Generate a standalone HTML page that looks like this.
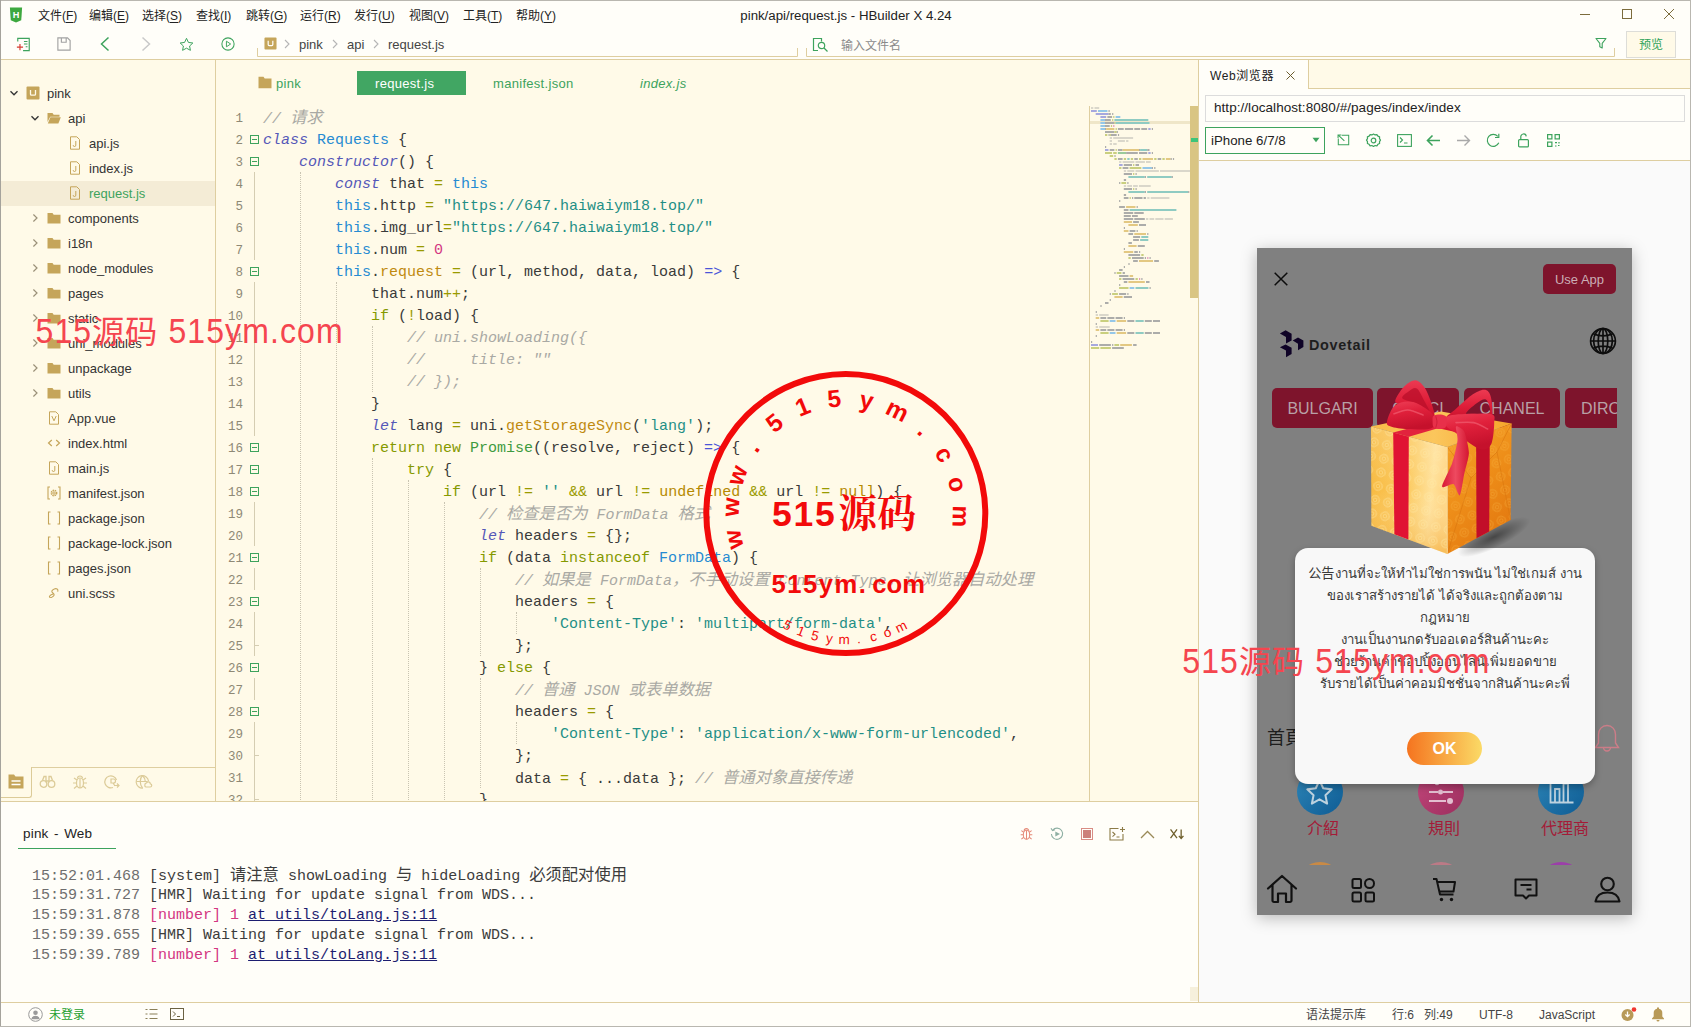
<!DOCTYPE html>
<html lang="zh-CN">
<head>
<meta charset="utf-8">
<title>pink/api/request.js - HBuilder X 4.24</title>
<style>
*{box-sizing:border-box;margin:0;padding:0}
html,body{width:1691px;height:1027px;overflow:hidden;background:#FFFAE8}
body{position:relative;font-family:"Liberation Sans","Noto Sans CJK SC",sans-serif;font-size:13px;color:#333}
.abs{position:absolute}
svg{display:block;overflow:visible}
/* top */
#top{position:absolute;left:0;top:0;width:1691px;height:59px;background:#FFFEF9}
#topline{position:absolute;left:0;top:59px;width:1691px;height:1px;background:#DECEA0}
.menu{position:absolute;top:7px;height:18px;line-height:18px;font-size:12px;color:#222;white-space:nowrap}
.menu u{text-decoration:underline;text-underline-offset:2px}
#title{position:absolute;top:7px;left:646px;width:400px;text-align:center;height:18px;line-height:18px;font-size:13.250px;color:#222}
.crumb{position:absolute;top:36px;height:18px;line-height:18px;font-size:13px;color:#444}
.csep{position:absolute;top:39px}
/* sidebar */
#side{position:absolute;left:0;top:60px;width:215px;height:741px;background:#FFFAE8}
#sideline{position:absolute;left:215px;top:60px;width:1px;height:741px;background:#DECEA0}
.trow{position:absolute;left:0;width:215px;height:25px}
.trow.sel{background:#F4ECD6}
.trow.sel .tl{color:#3DA35D}
.arr{position:absolute;top:7px;width:10px;height:10px}
.tiw{position:absolute;top:5px;width:14px;height:14px}
.ti{width:14px;height:14px}
.tl{position:absolute;top:4px;height:18px;line-height:18px;font-size:13px;color:#333;white-space:nowrap}
/* editor */
#editor{position:absolute;left:216px;top:60px;width:982px;height:741px;background:#FFFAE8;overflow:hidden}
.tab{letter-spacing:.3px;position:absolute;top:11px;height:24px;line-height:25px;font-size:13px;color:#3DA35D;white-space:nowrap}
#codewrap{position:absolute;left:0;top:0;width:1198px;height:801px;overflow:hidden;pointer-events:none;clip-path:inset(100px 0 0 216px)}
.ln{position:absolute;left:216px;width:27px;text-align:right;height:22px;line-height:22px;font-family:"Liberation Mono","DejaVu Sans Mono",monospace;font-size:12.5px;color:#8E8975}
.cl{position:absolute;height:22px;line-height:22px;white-space:pre;font-family:"Liberation Mono","Noto Sans CJK SC",monospace;font-size:15px;color:#3a3a3a}
.fold{position:absolute;left:250px;width:9px;height:9px;border:1px solid #3DA35D;background:#FFFAE8}
.fold:after{content:"";position:absolute;left:1px;top:3px;width:5px;height:1px;background:#3DA35D}
.fline{position:absolute;left:254px;width:1px;background:#D5CDB2}
.ftick{position:absolute;left:254px;width:5px;height:1px;background:#D5CDB2}
.ig{position:absolute;width:0;border-left:1px dotted #C9C4B2}
.cj{font-size:16.300px}
.k{color:#859900}.s{color:#5558B8;font-style:italic}.c{color:#268BD2}.t{color:#1F8F86}.n{color:#D33682}
.f{color:#C08A10}.m{color:#A9A9A4;font-style:italic}.o{color:#9A9A00}.u{color:#B58900}.a{color:#4A55D8}.g{color:#3E9A40}
/* console */
#console{position:absolute;left:0;top:802px;width:1198px;height:200px;background:#FFFEF9}
#conline{position:absolute;left:0;top:801px;width:1198px;height:1px;background:#DECEA0}
.log{position:absolute;left:32px;height:20px;line-height:20px;white-space:pre;font-family:"Liberation Mono","Noto Sans CJK SC",monospace;font-size:15px;color:#3c3c3c}
.log .ts{color:#6E6E6E}
.log .pk{color:#D33682}
.log a{color:#1D1D70;text-decoration:underline}
/* status */
#status{position:absolute;left:0;top:1003px;width:1691px;height:24px;background:#FFFEF9}
#statline{position:absolute;left:0;top:1002px;width:1691px;height:1px;background:#DECEA0}
.st{position:absolute;top:3px;height:18px;line-height:18px;font-size:12px;color:#444;white-space:nowrap}
/* right */
#right{position:absolute;left:1199px;top:60px;width:492px;height:941px;background:#FFFAE8}
#rightline{position:absolute;left:1198px;top:60px;width:1px;height:942px;background:#DECEA0}
/* watermark */
.wm{font-size:32px;line-height:40px;color:#F5454F;white-space:nowrap;letter-spacing:1.1px;font-family:"Liberation Sans","Noto Sans CJK SC",sans-serif}
.wl{display:inline-block;transform:scaleY(1.07);transform-origin:0 76.5%}
#preview{position:absolute;left:1199px;top:161px;width:492px;height:841px;background:#FAFAFA}
</style>
</head>
<body>
<!-- ============ top bars ============ -->
<div class="abs" style="left:0;top:0;width:1691px;height:1px;background:#B9B7B0;z-index:5"></div>
<div class="abs" style="left:0;top:0;width:1px;height:1027px;background:#A5A39C;z-index:5"></div>
<div class="abs" style="left:1690px;top:0;width:1px;height:1027px;background:#B9B7B0;z-index:5"></div>
<div class="abs" style="left:0;top:1026px;width:1691px;height:1px;background:#B9B7B0;z-index:5"></div>
<div id="top">
  <svg class="abs" style="left:9px;top:7px;width:14px;height:16px" viewBox="0 0 16 18"><path d="M1 0.5h14l-1 14.5L8 17.5 2 15z" fill="#3DA83F"/><text x="8" y="12.2" text-anchor="middle" font-family="Liberation Sans,sans-serif" font-size="10.5" font-weight="bold" fill="#fff">H</text></svg>
  <div class="menu" style="left:38px">文件(<u>F</u>)</div>
  <div class="menu" style="left:89px">编辑(<u>E</u>)</div>
  <div class="menu" style="left:142px">选择(<u>S</u>)</div>
  <div class="menu" style="left:196px">查找(<u>I</u>)</div>
  <div class="menu" style="left:246px">跳转(<u>G</u>)</div>
  <div class="menu" style="left:300px">运行(<u>R</u>)</div>
  <div class="menu" style="left:354px">发行(<u>U</u>)</div>
  <div class="menu" style="left:409px">视图(<u>V</u>)</div>
  <div class="menu" style="left:463px">工具(<u>T</u>)</div>
  <div class="menu" style="left:516px">帮助(<u>Y</u>)</div>
  <div id="title">pink/api/request.js - HBuilder X 4.24</div>
  <!-- window controls -->
  <svg class="abs" style="left:1580px;top:9px;width:10px;height:10px" viewBox="0 0 10 10"><path d="M0 5.500h10" stroke="#7C6C3C" stroke-width="1"/></svg>
  <svg class="abs" style="left:1622px;top:9px;width:10px;height:10px" viewBox="0 0 10 10"><rect x="0.500" y="0.500" width="9" height="9" fill="none" stroke="#7C6C3C" stroke-width="1"/></svg>
  <svg class="abs" style="left:1664px;top:9px;width:10px;height:10px" viewBox="0 0 10 10"><path d="M0 0l10 10M10 0L0 10" stroke="#7C6C3C" stroke-width="1"/></svg>
  <!-- toolbar icons -->
  <svg class="abs" style="left:16px;top:37px;width:15px;height:15px" viewBox="0 0 17 17"><path d="M2 5V1.5h13v14H8" fill="none" stroke="#3DA35D" stroke-width="1.3"/><path d="M9 5h4M9 8h4M11 11h2" stroke="#3DA35D" stroke-width="1.2"/><path d="M1 11.5h7M4.5 8v7" stroke="#D63A2F" stroke-width="1.3"/></svg>
  <svg class="abs" style="left:57px;top:37px;width:14px;height:14px" viewBox="0 0 16 16"><path d="M1 1h11l3 3v11H1z" fill="none" stroke="#A2A2A2" stroke-width="1.300"/><path d="M5 1v5h5.500V1" fill="none" stroke="#A2A2A2" stroke-width="1.300"/></svg>
  <svg class="abs" style="left:99px;top:36px;width:12px;height:16px" viewBox="0 0 12 16"><path d="M9.5 1.5L2.5 8l7 6.5" fill="none" stroke="#3DA35D" stroke-width="1.5"/></svg>
  <svg class="abs" style="left:140px;top:36px;width:12px;height:16px" viewBox="0 0 12 16"><path d="M2.5 1.5L9.5 8l-7 6.5" fill="none" stroke="#C9C9C9" stroke-width="1.5"/></svg>
  <svg class="abs" style="left:179px;top:37px;width:15px;height:15px" viewBox="0 0 18 18"><path d="M9 1.6l2.3 4.9 5.3.7-3.9 3.6 1 5.2L9 13.4 4.3 16l1-5.2L1.4 7.2l5.3-.7z" fill="none" stroke="#3DA35D" stroke-width="1.2" stroke-linejoin="round"/></svg>
  <svg class="abs" style="left:221px;top:37px;width:14px;height:14px" viewBox="0 0 16 16"><circle cx="8" cy="8" r="7" fill="none" stroke="#3DA35D" stroke-width="1.2"/><path d="M6.2 4.8L11 8l-4.800 3.200z" fill="none" stroke="#3DA35D" stroke-width="1.1" stroke-linejoin="round"/></svg>
  <!-- breadcrumb -->
  <svg class="abs" style="left:257px;top:48px;width:541px;height:9px" viewBox="0 0 541 9"><path d="M0.5 0v8.500h540V0" fill="none" stroke="#DECEA0" stroke-width="1"/></svg>
  <svg class="abs" style="left:264px;top:37px;width:13px;height:13px" viewBox="0 0 14 14"><rect x="0.5" y="0.5" width="13" height="13" rx="1" fill="#C5A55A"/><path d="M4.5 4v4.2a1 1 0 0 0 1 1h3a1 1 0 0 0 1-1V4" fill="none" stroke="#FFFEF9" stroke-width="1.3"/></svg>
  <svg class="csep" style="left:283px;width:8px;height:10px" viewBox="0 0 8 10"><path d="M2 1l4 4-4 4" fill="none" stroke="#B5B5B5" stroke-width="1.1"/></svg>
  <div class="crumb" style="left:299px">pink</div>
  <svg class="csep" style="left:331px;width:8px;height:10px" viewBox="0 0 8 10"><path d="M2 1l4 4-4 4" fill="none" stroke="#B5B5B5" stroke-width="1.1"/></svg>
  <div class="crumb" style="left:347px">api</div>
  <svg class="csep" style="left:372px;width:8px;height:10px" viewBox="0 0 8 10"><path d="M2 1l4 4-4 4" fill="none" stroke="#B5B5B5" stroke-width="1.1"/></svg>
  <div class="crumb" style="left:388px">request.js</div>
  <!-- search -->
  <svg class="abs" style="left:806px;top:48px;width:809px;height:9px" viewBox="0 0 809 9"><path d="M0.5 0v8.500h808V0" fill="none" stroke="#DECEA0" stroke-width="1"/></svg>
  <svg class="abs" style="left:812px;top:37px;width:17px;height:16px" viewBox="0 0 17 16"><path d="M6 13.500H1.500v-12h8v3" fill="none" stroke="#3DA35D" stroke-width="1.2"/><circle cx="9.500" cy="8.500" r="3.200" fill="none" stroke="#3DA35D" stroke-width="1.2"/><path d="M12 11l3.500 3.500" stroke="#3DA35D" stroke-width="1.3"/></svg>
  <div class="crumb" style="left:841px;top:36.500px;color:#8a8a8a;font-size:12px">输入文件名</div>
  <svg class="abs" style="left:1595px;top:37px;width:12px;height:12px" viewBox="0 0 12 12"><path d="M1 1.500h10L7.200 6.300V11l-2.400-1.200V6.300z" fill="none" stroke="#3DA35D" stroke-width="1.100" stroke-linejoin="round"/></svg>
  <div class="abs" style="left:1626px;top:31px;width:50px;height:27px;border:1px solid #DDDDD8;background:#FFFAE8;color:#2FA35A;font-size:12px;line-height:27px;text-align:center">预览</div>
</div>
<div id="topline"></div>

<!-- ============ sidebar ============ -->
<div id="side"></div>
<div id="sideline"></div>
<div class="abs" style="left:0;top:0;width:215px;height:801px;overflow:hidden">
<div class="trow" style="top:81px"><svg class="arr" style="left:9px" viewBox="0 0 10 10"><path d="M1.5 3.2L5 6.8 8.5 3.2" fill="none" stroke="#333" stroke-width="1.3"/></svg><span class="tiw" style="left:26px"><svg class="ti" viewBox="0 0 14 14"><rect x="0.5" y="0.5" width="13" height="13" rx="1" fill="#C5A55A"/><path d="M4.5 4v4.2a1 1 0 0 0 1 1h3a1 1 0 0 0 1-1V4" fill="none" stroke="#FFFAE8" stroke-width="1.3"/></svg></span><span class="tl" style="left:47px">pink</span></div>
<div class="trow" style="top:106px"><svg class="arr" style="left:30px" viewBox="0 0 10 10"><path d="M1.5 3.2L5 6.8 8.5 3.2" fill="none" stroke="#333" stroke-width="1.3"/></svg><span class="tiw" style="left:47px"><svg class="ti" viewBox="0 0 14 14"><path d="M0.5 2h5l1.2 1.8h5.8v2H3.2L0.5 11z" fill="#C5A55A"/><path d="M3.4 6.3h10.4l-2.4 6.2H0.8z" fill="#C5A55A"/></svg></span><span class="tl" style="left:68px">api</span></div>
<div class="trow" style="top:131px"><span class="tiw" style="left:68px"><svg class="ti" viewBox="0 0 14 14"><path d="M2.5 0.8h6.3l2.7 2.7v9.7h-9z" fill="none" stroke="#C5A55A" stroke-width="1"/><path d="M7.8 5v4.2a1.3 1.3 0 0 1-2.6 0" fill="none" stroke="#C5A55A" stroke-width="1"/></svg></span><span class="tl" style="left:89px">api.js</span></div>
<div class="trow" style="top:156px"><span class="tiw" style="left:68px"><svg class="ti" viewBox="0 0 14 14"><path d="M2.5 0.8h6.3l2.7 2.7v9.7h-9z" fill="none" stroke="#C5A55A" stroke-width="1"/><path d="M7.8 5v4.2a1.3 1.3 0 0 1-2.6 0" fill="none" stroke="#C5A55A" stroke-width="1"/></svg></span><span class="tl" style="left:89px">index.js</span></div>
<div class="trow sel" style="top:181px"><span class="tiw" style="left:68px"><svg class="ti" viewBox="0 0 14 14"><path d="M2.5 0.8h6.3l2.7 2.7v9.7h-9z" fill="none" stroke="#C5A55A" stroke-width="1"/><path d="M7.8 5v4.2a1.3 1.3 0 0 1-2.6 0" fill="none" stroke="#C5A55A" stroke-width="1"/></svg></span><span class="tl" style="left:89px">request.js</span></div>
<div class="trow" style="top:206px"><svg class="arr" style="left:30px" viewBox="0 0 10 10"><path d="M3.4 1.5L7 5 3.4 8.5" fill="none" stroke="#9a9078" stroke-width="1.2"/></svg><span class="tiw" style="left:47px"><svg class="ti" viewBox="0 0 14 14"><path d="M0.5 2h5l1.2 1.8h6.8v8.7h-13z" fill="#C5A55A"/></svg></span><span class="tl" style="left:68px">components</span></div>
<div class="trow" style="top:231px"><svg class="arr" style="left:30px" viewBox="0 0 10 10"><path d="M3.4 1.5L7 5 3.4 8.5" fill="none" stroke="#9a9078" stroke-width="1.2"/></svg><span class="tiw" style="left:47px"><svg class="ti" viewBox="0 0 14 14"><path d="M0.5 2h5l1.2 1.8h6.8v8.7h-13z" fill="#C5A55A"/></svg></span><span class="tl" style="left:68px">i18n</span></div>
<div class="trow" style="top:256px"><svg class="arr" style="left:30px" viewBox="0 0 10 10"><path d="M3.4 1.5L7 5 3.4 8.5" fill="none" stroke="#9a9078" stroke-width="1.2"/></svg><span class="tiw" style="left:47px"><svg class="ti" viewBox="0 0 14 14"><path d="M0.5 2h5l1.2 1.8h6.8v8.7h-13z" fill="#C5A55A"/></svg></span><span class="tl" style="left:68px">node_modules</span></div>
<div class="trow" style="top:281px"><svg class="arr" style="left:30px" viewBox="0 0 10 10"><path d="M3.4 1.5L7 5 3.4 8.5" fill="none" stroke="#9a9078" stroke-width="1.2"/></svg><span class="tiw" style="left:47px"><svg class="ti" viewBox="0 0 14 14"><path d="M0.5 2h5l1.2 1.8h6.8v8.7h-13z" fill="#C5A55A"/></svg></span><span class="tl" style="left:68px">pages</span></div>
<div class="trow" style="top:306px"><svg class="arr" style="left:30px" viewBox="0 0 10 10"><path d="M3.4 1.5L7 5 3.4 8.5" fill="none" stroke="#9a9078" stroke-width="1.2"/></svg><span class="tiw" style="left:47px"><svg class="ti" viewBox="0 0 14 14"><path d="M0.5 2h5l1.2 1.8h6.8v8.7h-13z" fill="#C5A55A"/></svg></span><span class="tl" style="left:68px">static</span></div>
<div class="trow" style="top:331px"><svg class="arr" style="left:30px" viewBox="0 0 10 10"><path d="M3.4 1.5L7 5 3.4 8.5" fill="none" stroke="#9a9078" stroke-width="1.2"/></svg><span class="tiw" style="left:47px"><svg class="ti" viewBox="0 0 14 14"><path d="M0.5 2h5l1.2 1.8h6.8v8.7h-13z" fill="#C5A55A"/></svg></span><span class="tl" style="left:68px">uni_modules</span></div>
<div class="trow" style="top:356px"><svg class="arr" style="left:30px" viewBox="0 0 10 10"><path d="M3.4 1.5L7 5 3.4 8.5" fill="none" stroke="#9a9078" stroke-width="1.2"/></svg><span class="tiw" style="left:47px"><svg class="ti" viewBox="0 0 14 14"><path d="M0.5 2h5l1.2 1.8h6.8v8.7h-13z" fill="#C5A55A"/></svg></span><span class="tl" style="left:68px">unpackage</span></div>
<div class="trow" style="top:381px"><svg class="arr" style="left:30px" viewBox="0 0 10 10"><path d="M3.4 1.5L7 5 3.4 8.5" fill="none" stroke="#9a9078" stroke-width="1.2"/></svg><span class="tiw" style="left:47px"><svg class="ti" viewBox="0 0 14 14"><path d="M0.5 2h5l1.2 1.8h6.8v8.7h-13z" fill="#C5A55A"/></svg></span><span class="tl" style="left:68px">utils</span></div>
<div class="trow" style="top:406px"><span class="tiw" style="left:47px"><svg class="ti" viewBox="0 0 14 14"><path d="M2.5 0.8h6.3l2.7 2.7v9.7h-9z" fill="none" stroke="#C5A55A" stroke-width="1"/><path d="M4.8 5l2.2 4.8L9.2 5" fill="none" stroke="#C5A55A" stroke-width="1"/></svg></span><span class="tl" style="left:68px">App.vue</span></div>
<div class="trow" style="top:431px"><span class="tiw" style="left:47px"><svg class="ti" viewBox="0 0 14 14"><path d="M4.8 4L1.5 7l3.3 3M9.2 4l3.3 3-3.3 3" fill="none" stroke="#C5A55A" stroke-width="1.2"/></svg></span><span class="tl" style="left:68px">index.html</span></div>
<div class="trow" style="top:456px"><span class="tiw" style="left:47px"><svg class="ti" viewBox="0 0 14 14"><path d="M2.5 0.8h6.3l2.7 2.7v9.7h-9z" fill="none" stroke="#C5A55A" stroke-width="1"/><path d="M7.8 5v4.2a1.3 1.3 0 0 1-2.6 0" fill="none" stroke="#C5A55A" stroke-width="1"/></svg></span><span class="tl" style="left:68px">main.js</span></div>
<div class="trow" style="top:481px"><span class="tiw" style="left:47px"><svg class="ti" viewBox="0 0 14 14"><path d="M3 1H1v12h2M11 1h2v12h-2" fill="none" stroke="#C5A55A" stroke-width="1.1"/><circle cx="7" cy="7" r="2.6" fill="none" stroke="#C5A55A" stroke-width="1.6" stroke-dasharray="1.4 0.7"/><circle cx="7" cy="7" r="1.6" fill="#C5A55A"/><circle cx="7" cy="7" r="0.7" fill="#FFFAE8"/></svg></span><span class="tl" style="left:68px">manifest.json</span></div>
<div class="trow" style="top:506px"><span class="tiw" style="left:47px"><svg class="ti" viewBox="0 0 14 14"><path d="M3.5 1H1.5v12h2M10.5 1h2v12h-2" fill="none" stroke="#C5A55A" stroke-width="1.1"/></svg></span><span class="tl" style="left:68px">package.json</span></div>
<div class="trow" style="top:531px"><span class="tiw" style="left:47px"><svg class="ti" viewBox="0 0 14 14"><path d="M3.5 1H1.5v12h2M10.5 1h2v12h-2" fill="none" stroke="#C5A55A" stroke-width="1.1"/></svg></span><span class="tl" style="left:68px">package-lock.json</span></div>
<div class="trow" style="top:556px"><span class="tiw" style="left:47px"><svg class="ti" viewBox="0 0 14 14"><path d="M3.5 1H1.5v12h2M10.5 1h2v12h-2" fill="none" stroke="#C5A55A" stroke-width="1.1"/></svg></span><span class="tl" style="left:68px">pages.json</span></div>
<div class="trow" style="top:581px"><span class="tiw" style="left:47px"><svg class="ti" viewBox="0 0 14 14"><path d="M10.8 5.2C11.5 3.2 9.5 2 7.3 2.9 5 3.8 4 5.6 5.6 6.8 7.2 8 7.6 9 6.4 10.2 5.2 11.4 3.4 12 2.6 11.2 1.8 10.4 3.6 8.6 5.6 8.2" fill="none" stroke="#C5A55A" stroke-width="1.1" stroke-linecap="round"/></svg></span><span class="tl" style="left:68px">uni.scss</span></div>
</div>
<!-- sidebar bottom tabs -->
<div class="abs" style="left:0;top:767px;width:215px;height:1px;background:#DECEA0"></div>
<div class="abs" style="left:0;top:767px;width:32px;height:31px;background:#FFFAE8;border-right:1px solid #DCCB98;border-bottom:1px solid #DCCB98;border-bottom-right-radius:3px"></div>
<svg class="abs" style="left:8px;top:774px;width:16px;height:15px" viewBox="0 0 16 15"><path d="M0.500 0.500h5.500l1.500 2h8v12h-15z" fill="#C5A55A"/><path d="M3.500 7h9M3.500 10.500h9" stroke="#FFFEF9" stroke-width="1.300"/></svg>
<svg class="abs" style="left:39px;top:774px;width:17px;height:15px" viewBox="0 0 17 15"><g fill="none" stroke="#DCCB98" stroke-width="1.3"><circle cx="4.500" cy="10" r="3.300"/><circle cx="12.500" cy="10" r="3.300"/><path d="M3.500 6.500l1.500-4h2v6M13.500 6.500l-1.500-4h-2v6M7 7h3"/></g></svg>
<svg class="abs" style="left:72px;top:774px;width:16px;height:16px" viewBox="0 0 16 16"><g fill="none" stroke="#DCCB98" stroke-width="1.2"><ellipse cx="8" cy="9" rx="3.500" ry="5"/><path d="M5.500 4.500a2.500 2.500 0 0 1 5 0M8 4.500v9.500M1 9h3.500M11.500 9H15M2 4l3 2M14 4l-3 2M2 14.500l3-2.500M14 14.500l-3-2.500"/></g></svg>
<svg class="abs" style="left:103px;top:774px;width:17px;height:16px" viewBox="0 0 17 16"><g fill="none" stroke="#DCCB98" stroke-width="1.2"><path d="M13.500 6A6 6 0 1 0 10 13.500"/><path d="M8 5h2.500a2 2 0 0 1 0 4H8zM10 9l2 3"/><path d="M11 11.500h5M14 9.500l2 2-2 2"/></g></svg>
<svg class="abs" style="left:135px;top:774px;width:17px;height:16px" viewBox="0 0 17 16"><g fill="none" stroke="#DCCB98" stroke-width="1.2"><path d="M13.500 7A6.200 6.200 0 1 0 8 14"/><path d="M1.500 7.500h11M7.500 1.500c-3 3-3 9 0 12.500M7.500 1.500c2 2 2.800 4 2.800 6"/><path d="M10 11a1.500 1.500 0 0 1 1.500-2 2 2 0 0 1 3.800.8 1.600 1.600 0 0 1-.3 3.200h-4a1.300 1.300 0 0 1-1-2z"/></g></svg>

<!-- ============ editor ============ -->
<div id="editor">
  <svg class="abs" style="left:42px;top:16px;width:14px;height:13px" viewBox="0 0 14 13"><path d="M0.500 0.800h5l1.200 1.800h6.800v9.600h-13z" fill="#C5A55A"/></svg>
  <div class="tab" style="left:60px">pink</div>
  <div class="tab" style="left:141px;width:109px;background:#41A663;color:#fff;padding-left:18px">request.js</div>
  <div class="tab" style="left:277px">manifest.json</div>
  <div class="tab" style="left:424px;font-style:italic">index.js</div>
</div>
<div id="codewrap">
<div class="ig" style="left:300px;top:172px;height:638px"></div>
<div class="ig" style="left:336px;top:282px;height:528px"></div>
<div class="ig" style="left:372px;top:326px;height:66px"></div>
<div class="ig" style="left:372px;top:458px;height:352px"></div>
<div class="ig" style="left:408px;top:480px;height:330px"></div>
<div class="ig" style="left:444px;top:502px;height:308px"></div>
<div class="ig" style="left:480px;top:568px;height:88px"></div>
<div class="ig" style="left:480px;top:678px;height:110px"></div>
<div class="ig" style="left:516px;top:612px;height:22px"></div>
<div class="ig" style="left:516px;top:722px;height:22px"></div>
<div class="fline" style="top:172px;height:22px"></div>
<div class="fline" style="top:194px;height:22px"></div>
<div class="fline" style="top:216px;height:22px"></div>
<div class="fline" style="top:238px;height:22px"></div>
<div class="fline" style="top:282px;height:22px"></div>
<div class="fline" style="top:304px;height:22px"></div>
<div class="fline" style="top:326px;height:22px"></div>
<div class="fline" style="top:348px;height:22px"></div>
<div class="fline" style="top:370px;height:22px"></div>
<div class="fline" style="top:392px;height:22px"></div>
<div class="fline" style="top:414px;height:22px"></div>
<div class="fline" style="top:502px;height:22px"></div>
<div class="fline" style="top:524px;height:22px"></div>
<div class="fline" style="top:568px;height:22px"></div>
<div class="fline" style="top:612px;height:22px"></div>
<div class="fline" style="top:634px;height:22px"></div>
<div class="ftick" style="top:645px"></div>
<div class="fline" style="top:678px;height:22px"></div>
<div class="fline" style="top:722px;height:22px"></div>
<div class="fline" style="top:744px;height:22px"></div>
<div class="ftick" style="top:755px"></div>
<div class="fline" style="top:766px;height:22px"></div>
<div class="fline" style="top:788px;height:22px"></div>
<div class="ftick" style="top:799px"></div>
<div class="ln" style="top:108px">1</div>
<div class="cl" style="top:108px;left:263px"><span class="m">// <span class="cj">请求</span></span></div>
<div class="ln" style="top:130px">2</div>
<div class="fold" style="top:135px"></div>
<div class="cl" style="top:130px;left:263px"><span class="s">class</span> <span class="c">Requests</span> {</div>
<div class="ln" style="top:152px">3</div>
<div class="fold" style="top:157px"></div>
<div class="cl" style="top:152px;left:299px"><span class="s">constructor</span>() {</div>
<div class="ln" style="top:174px">4</div>
<div class="cl" style="top:174px;left:335px"><span class="s">const</span> that <span class="o">=</span> <span class="c">this</span></div>
<div class="ln" style="top:196px">5</div>
<div class="cl" style="top:196px;left:335px"><span class="c">this</span>.http <span class="o">=</span> <span class="t">"https://647.haiwaiym18.top/"</span></div>
<div class="ln" style="top:218px">6</div>
<div class="cl" style="top:218px;left:335px"><span class="c">this</span>.img_url<span class="o">=</span><span class="t">"https://647.haiwaiym18.top/"</span></div>
<div class="ln" style="top:240px">7</div>
<div class="cl" style="top:240px;left:335px"><span class="c">this</span>.num <span class="o">=</span> <span class="n">0</span></div>
<div class="ln" style="top:262px">8</div>
<div class="fold" style="top:267px"></div>
<div class="cl" style="top:262px;left:335px"><span class="c">this</span>.<span class="f">request</span> <span class="o">=</span> (url, method, data, load) <span class="a">=&gt;</span> {</div>
<div class="ln" style="top:284px">9</div>
<div class="cl" style="top:284px;left:371px">that.num<span class="o">++</span>;</div>
<div class="ln" style="top:306px">10</div>
<div class="cl" style="top:306px;left:371px"><span class="k">if</span> (<span class="o">!</span>load) {</div>
<div class="ln" style="top:328px">11</div>
<div class="cl" style="top:328px;left:407px"><span class="m">// uni.showLoading({</span></div>
<div class="ln" style="top:350px">12</div>
<div class="cl" style="top:350px;left:407px"><span class="m">//     title: ""</span></div>
<div class="ln" style="top:372px">13</div>
<div class="cl" style="top:372px;left:407px"><span class="m">// });</span></div>
<div class="ln" style="top:394px">14</div>
<div class="cl" style="top:394px;left:371px">}</div>
<div class="ln" style="top:416px">15</div>
<div class="cl" style="top:416px;left:371px"><span class="s">let</span> lang <span class="o">=</span> uni.<span class="f">getStorageSync</span>(<span class="t">'lang'</span>);</div>
<div class="ln" style="top:438px">16</div>
<div class="fold" style="top:443px"></div>
<div class="cl" style="top:438px;left:371px"><span class="k">return</span> <span class="k">new</span> <span class="g">Promise</span>((resolve, reject) <span class="a">=&gt;</span> {</div>
<div class="ln" style="top:460px">17</div>
<div class="fold" style="top:465px"></div>
<div class="cl" style="top:460px;left:407px"><span class="k">try</span> {</div>
<div class="ln" style="top:482px">18</div>
<div class="fold" style="top:487px"></div>
<div class="cl" style="top:482px;left:443px"><span class="k">if</span> (url <span class="o">!=</span> <span class="t">''</span> <span class="o">&amp;&amp;</span> url <span class="o">!=</span> <span class="u">undefined</span> <span class="o">&amp;&amp;</span> url <span class="o">!=</span> <span class="u">null</span>) {</div>
<div class="ln" style="top:504px">19</div>
<div class="cl" style="top:504px;left:479px"><span class="m">// <span class="cj">检查是否为</span> FormData <span class="cj">格式</span></span></div>
<div class="ln" style="top:526px">20</div>
<div class="cl" style="top:526px;left:479px"><span class="s">let</span> headers <span class="o">=</span> {};</div>
<div class="ln" style="top:548px">21</div>
<div class="fold" style="top:553px"></div>
<div class="cl" style="top:548px;left:479px"><span class="k">if</span> (data <span class="k">instanceof</span> <span class="c">FormData</span>) {</div>
<div class="ln" style="top:570px">22</div>
<div class="cl" style="top:570px;left:515px"><span class="m">// <span class="cj">如果是</span> FormData<span class="cj">，不手动设置</span> Content-Type<span class="cj">，让浏览器自动处理</span></span></div>
<div class="ln" style="top:592px">23</div>
<div class="fold" style="top:597px"></div>
<div class="cl" style="top:592px;left:515px">headers <span class="o">=</span> {</div>
<div class="ln" style="top:614px">24</div>
<div class="cl" style="top:614px;left:551px"><span class="t">'Content-Type'</span>: <span class="t">'multipart/form-data'</span>,</div>
<div class="ln" style="top:636px">25</div>
<div class="cl" style="top:636px;left:515px">};</div>
<div class="ln" style="top:658px">26</div>
<div class="fold" style="top:663px"></div>
<div class="cl" style="top:658px;left:479px">} <span class="k">else</span> {</div>
<div class="ln" style="top:680px">27</div>
<div class="cl" style="top:680px;left:515px"><span class="m">// <span class="cj">普通</span> JSON <span class="cj">或表单数据</span></span></div>
<div class="ln" style="top:702px">28</div>
<div class="fold" style="top:707px"></div>
<div class="cl" style="top:702px;left:515px">headers <span class="o">=</span> {</div>
<div class="ln" style="top:724px">29</div>
<div class="cl" style="top:724px;left:551px"><span class="t">'Content-Type'</span>: <span class="t">'application/x-www-form-urlencoded'</span>,</div>
<div class="ln" style="top:746px">30</div>
<div class="cl" style="top:746px;left:515px">};</div>
<div class="ln" style="top:768px">31</div>
<div class="cl" style="top:768px;left:515px">data <span class="o">=</span> { ...data }; <span class="m">// <span class="cj">普通对象直接传递</span></span></div>
<div class="ln" style="top:790px">32</div>
<div class="cl" style="top:790px;left:479px">}</div>
</div>
<!-- minimap + scrollbar -->
<div class="abs" style="left:1089px;top:106px;width:1px;height:695px;background:#DECEA0"></div>
<div class="abs" style="left:1090px;top:121px;width:100px;height:3px;background:#EFE6C8"></div><svg class="abs" style="left:0;top:0;width:1691px;height:801px" viewBox="0 0 1691 801"><rect x="1091.0" y="107.0" width="2.3" height="2" fill="#DAD7CB"/><rect x="1094.5" y="107.0" width="4.7" height="2" fill="#DAD7CB"/><rect x="1091.0" y="110.0" width="5.8" height="2" fill="#A6A8DE"/><rect x="1098.0" y="110.0" width="9.4" height="2" fill="#95C7E8"/><rect x="1108.5" y="110.0" width="1.2" height="2" fill="#ACACAA"/><rect x="1095.7" y="113.0" width="12.9" height="2" fill="#A6A8DE"/><rect x="1108.5" y="113.0" width="2.3" height="2" fill="#ACACAA"/><rect x="1112.1" y="113.0" width="1.2" height="2" fill="#ACACAA"/><rect x="1100.4" y="116.0" width="5.8" height="2" fill="#A6A8DE"/><rect x="1107.4" y="116.0" width="4.7" height="2" fill="#ACACAA"/><rect x="1113.2" y="116.0" width="1.2" height="2" fill="#C9CF7E"/><rect x="1115.6" y="116.0" width="4.7" height="2" fill="#95C7E8"/><rect x="1100.4" y="119.0" width="4.7" height="2" fill="#95C7E8"/><rect x="1105.0" y="119.0" width="5.8" height="2" fill="#ACACAA"/><rect x="1112.1" y="119.0" width="1.2" height="2" fill="#C9CF7E"/><rect x="1114.4" y="119.0" width="33.9" height="2" fill="#8FCBC2"/><rect x="1100.4" y="122.0" width="4.7" height="2" fill="#95C7E8"/><rect x="1105.0" y="122.0" width="9.4" height="2" fill="#ACACAA"/><rect x="1114.4" y="122.0" width="1.2" height="2" fill="#C9CF7E"/><rect x="1115.6" y="122.0" width="33.9" height="2" fill="#8FCBC2"/><rect x="1100.4" y="125.0" width="4.7" height="2" fill="#95C7E8"/><rect x="1105.0" y="125.0" width="4.7" height="2" fill="#ACACAA"/><rect x="1110.9" y="125.0" width="1.2" height="2" fill="#C9CF7E"/><rect x="1113.2" y="125.0" width="1.2" height="2" fill="#E59ABD"/><rect x="1100.4" y="128.0" width="4.7" height="2" fill="#95C7E8"/><rect x="1105.0" y="128.0" width="1.2" height="2" fill="#ACACAA"/><rect x="1106.2" y="128.0" width="8.2" height="2" fill="#E3C882"/><rect x="1115.6" y="128.0" width="1.2" height="2" fill="#C9CF7E"/><rect x="1117.9" y="128.0" width="5.8" height="2" fill="#ACACAA"/><rect x="1124.9" y="128.0" width="8.2" height="2" fill="#ACACAA"/><rect x="1134.3" y="128.0" width="5.8" height="2" fill="#ACACAA"/><rect x="1141.3" y="128.0" width="5.8" height="2" fill="#ACACAA"/><rect x="1148.3" y="128.0" width="2.3" height="2" fill="#A6A8DE"/><rect x="1151.8" y="128.0" width="1.2" height="2" fill="#ACACAA"/><rect x="1105.0" y="131.0" width="9.4" height="2" fill="#ACACAA"/><rect x="1114.4" y="131.0" width="2.3" height="2" fill="#C9CF7E"/><rect x="1116.7" y="131.0" width="1.2" height="2" fill="#ACACAA"/><rect x="1105.0" y="134.0" width="2.3" height="2" fill="#C9CF7E"/><rect x="1108.5" y="134.0" width="1.2" height="2" fill="#ACACAA"/><rect x="1109.7" y="134.0" width="1.2" height="2" fill="#C9CF7E"/><rect x="1110.9" y="134.0" width="5.8" height="2" fill="#ACACAA"/><rect x="1117.9" y="134.0" width="1.2" height="2" fill="#ACACAA"/><rect x="1109.7" y="137.0" width="2.3" height="2" fill="#DAD7CB"/><rect x="1113.2" y="137.0" width="19.9" height="2" fill="#DAD7CB"/><rect x="1109.7" y="140.0" width="2.3" height="2" fill="#DAD7CB"/><rect x="1117.9" y="140.0" width="7.0" height="2" fill="#DAD7CB"/><rect x="1126.1" y="140.0" width="2.3" height="2" fill="#DAD7CB"/><rect x="1109.7" y="143.0" width="2.3" height="2" fill="#DAD7CB"/><rect x="1113.2" y="143.0" width="3.5" height="2" fill="#DAD7CB"/><rect x="1105.0" y="146.0" width="1.2" height="2" fill="#ACACAA"/><rect x="1105.0" y="149.0" width="3.5" height="2" fill="#A6A8DE"/><rect x="1109.7" y="149.0" width="4.7" height="2" fill="#ACACAA"/><rect x="1115.6" y="149.0" width="1.2" height="2" fill="#C9CF7E"/><rect x="1117.9" y="149.0" width="4.7" height="2" fill="#ACACAA"/><rect x="1122.6" y="149.0" width="16.4" height="2" fill="#E3C882"/><rect x="1139.0" y="149.0" width="1.2" height="2" fill="#ACACAA"/><rect x="1140.1" y="149.0" width="7.0" height="2" fill="#8FCBC2"/><rect x="1147.2" y="149.0" width="2.3" height="2" fill="#ACACAA"/><rect x="1105.0" y="152.0" width="7.0" height="2" fill="#C9CF7E"/><rect x="1113.2" y="152.0" width="3.5" height="2" fill="#C9CF7E"/><rect x="1117.9" y="152.0" width="8.2" height="2" fill="#9ACB9A"/><rect x="1126.1" y="152.0" width="11.7" height="2" fill="#ACACAA"/><rect x="1139.0" y="152.0" width="8.2" height="2" fill="#ACACAA"/><rect x="1148.3" y="152.0" width="2.3" height="2" fill="#A6A8DE"/><rect x="1151.8" y="152.0" width="1.2" height="2" fill="#ACACAA"/><rect x="1109.7" y="155.0" width="3.5" height="2" fill="#C9CF7E"/><rect x="1114.4" y="155.0" width="1.2" height="2" fill="#ACACAA"/><rect x="1114.4" y="158.0" width="2.3" height="2" fill="#C9CF7E"/><rect x="1117.9" y="158.0" width="4.7" height="2" fill="#ACACAA"/><rect x="1123.8" y="158.0" width="2.3" height="2" fill="#C9CF7E"/><rect x="1127.3" y="158.0" width="2.3" height="2" fill="#8FCBC2"/><rect x="1130.8" y="158.0" width="2.3" height="2" fill="#C9CF7E"/><rect x="1134.3" y="158.0" width="3.5" height="2" fill="#ACACAA"/><rect x="1139.0" y="158.0" width="2.3" height="2" fill="#C9CF7E"/><rect x="1142.5" y="158.0" width="10.5" height="2" fill="#E3C882"/><rect x="1154.2" y="158.0" width="2.3" height="2" fill="#C9CF7E"/><rect x="1157.7" y="158.0" width="3.5" height="2" fill="#ACACAA"/><rect x="1162.4" y="158.0" width="2.3" height="2" fill="#C9CF7E"/><rect x="1165.9" y="158.0" width="4.7" height="2" fill="#E3C882"/><rect x="1170.6" y="158.0" width="1.2" height="2" fill="#ACACAA"/><rect x="1172.9" y="158.0" width="1.2" height="2" fill="#ACACAA"/><rect x="1119.1" y="161.0" width="2.3" height="2" fill="#DAD7CB"/><rect x="1122.6" y="161.0" width="11.7" height="2" fill="#DAD7CB"/><rect x="1135.5" y="161.0" width="9.4" height="2" fill="#DAD7CB"/><rect x="1146.0" y="161.0" width="4.7" height="2" fill="#DAD7CB"/><rect x="1119.1" y="164.0" width="3.5" height="2" fill="#A6A8DE"/><rect x="1123.8" y="164.0" width="8.2" height="2" fill="#ACACAA"/><rect x="1133.1" y="164.0" width="1.2" height="2" fill="#C9CF7E"/><rect x="1135.5" y="164.0" width="3.5" height="2" fill="#ACACAA"/><rect x="1119.1" y="167.0" width="2.3" height="2" fill="#C9CF7E"/><rect x="1122.6" y="167.0" width="5.8" height="2" fill="#ACACAA"/><rect x="1129.6" y="167.0" width="11.7" height="2" fill="#C9CF7E"/><rect x="1142.5" y="167.0" width="9.4" height="2" fill="#95C7E8"/><rect x="1151.8" y="167.0" width="1.2" height="2" fill="#ACACAA"/><rect x="1154.2" y="167.0" width="1.2" height="2" fill="#ACACAA"/><rect x="1123.8" y="170.0" width="2.3" height="2" fill="#DAD7CB"/><rect x="1127.3" y="170.0" width="7.0" height="2" fill="#DAD7CB"/><rect x="1135.5" y="170.0" width="23.4" height="2" fill="#DAD7CB"/><rect x="1160.0" y="170.0" width="35.1" height="2" fill="#DAD7CB"/><rect x="1123.8" y="173.0" width="8.2" height="2" fill="#ACACAA"/><rect x="1133.1" y="173.0" width="1.2" height="2" fill="#C9CF7E"/><rect x="1135.5" y="173.0" width="1.2" height="2" fill="#ACACAA"/><rect x="1128.4" y="176.0" width="16.4" height="2" fill="#8FCBC2"/><rect x="1144.8" y="176.0" width="1.2" height="2" fill="#ACACAA"/><rect x="1147.2" y="176.0" width="24.6" height="2" fill="#8FCBC2"/><rect x="1171.7" y="176.0" width="1.2" height="2" fill="#ACACAA"/><rect x="1123.8" y="179.0" width="2.3" height="2" fill="#ACACAA"/><rect x="1119.1" y="182.0" width="1.2" height="2" fill="#ACACAA"/><rect x="1121.4" y="182.0" width="4.7" height="2" fill="#C9CF7E"/><rect x="1127.3" y="182.0" width="1.2" height="2" fill="#ACACAA"/><rect x="1123.8" y="185.0" width="2.3" height="2" fill="#DAD7CB"/><rect x="1127.3" y="185.0" width="4.7" height="2" fill="#DAD7CB"/><rect x="1133.1" y="185.0" width="4.7" height="2" fill="#DAD7CB"/><rect x="1139.0" y="185.0" width="11.7" height="2" fill="#DAD7CB"/><rect x="1123.8" y="188.0" width="8.2" height="2" fill="#ACACAA"/><rect x="1133.1" y="188.0" width="1.2" height="2" fill="#C9CF7E"/><rect x="1135.5" y="188.0" width="1.2" height="2" fill="#ACACAA"/><rect x="1128.4" y="191.0" width="16.4" height="2" fill="#8FCBC2"/><rect x="1144.8" y="191.0" width="1.2" height="2" fill="#ACACAA"/><rect x="1147.2" y="191.0" width="40.9" height="2" fill="#8FCBC2"/><rect x="1188.1" y="191.0" width="1.2" height="2" fill="#ACACAA"/><rect x="1123.8" y="194.0" width="2.3" height="2" fill="#ACACAA"/><rect x="1123.8" y="197.0" width="4.7" height="2" fill="#ACACAA"/><rect x="1129.6" y="197.0" width="1.2" height="2" fill="#C9CF7E"/><rect x="1132.0" y="197.0" width="1.2" height="2" fill="#ACACAA"/><rect x="1134.3" y="197.0" width="8.2" height="2" fill="#ACACAA"/><rect x="1143.6" y="197.0" width="2.3" height="2" fill="#ACACAA"/><rect x="1147.2" y="197.0" width="2.3" height="2" fill="#DAD7CB"/><rect x="1150.7" y="197.0" width="18.7" height="2" fill="#DAD7CB"/><rect x="1119.1" y="200.0" width="1.2" height="2" fill="#ACACAA"/><rect x="1119.1" y="206.0" width="5.8" height="2" fill="#ACACAA"/><rect x="1126.1" y="206.0" width="9.4" height="2" fill="#E3C882"/><rect x="1136.6" y="206.0" width="1.2" height="2" fill="#ACACAA"/><rect x="1123.8" y="209.0" width="4.7" height="2" fill="#ACACAA"/><rect x="1129.6" y="209.0" width="46.8" height="2" fill="#8FCBC2"/><rect x="1123.8" y="212.0" width="9.4" height="2" fill="#ACACAA"/><rect x="1134.3" y="212.0" width="9.4" height="2" fill="#ACACAA"/><rect x="1123.8" y="215.0" width="7.0" height="2" fill="#ACACAA"/><rect x="1132.0" y="215.0" width="5.8" height="2" fill="#ACACAA"/><rect x="1123.8" y="218.0" width="9.4" height="2" fill="#ACACAA"/><rect x="1134.3" y="218.0" width="10.5" height="2" fill="#ACACAA"/><rect x="1146.0" y="218.0" width="2.3" height="2" fill="#DAD7CB"/><rect x="1149.5" y="218.0" width="4.7" height="2" fill="#DAD7CB"/><rect x="1155.3" y="218.0" width="8.2" height="2" fill="#DAD7CB"/><rect x="1164.7" y="218.0" width="8.2" height="2" fill="#DAD7CB"/><rect x="1123.8" y="221.0" width="8.2" height="2" fill="#E3C882"/><rect x="1133.1" y="221.0" width="5.8" height="2" fill="#ACACAA"/><rect x="1128.4" y="224.0" width="9.4" height="2" fill="#E3C882"/><rect x="1139.0" y="224.0" width="7.0" height="2" fill="#ACACAA"/><rect x="1123.8" y="227.0" width="1.2" height="2" fill="#ACACAA"/><rect x="1123.8" y="230.0" width="4.7" height="2" fill="#E3C882"/><rect x="1129.6" y="230.0" width="5.8" height="2" fill="#ACACAA"/><rect x="1136.6" y="230.0" width="1.2" height="2" fill="#ACACAA"/><rect x="1128.4" y="233.0" width="4.7" height="2" fill="#ACACAA"/><rect x="1134.3" y="233.0" width="11.7" height="2" fill="#E3C882"/><rect x="1147.2" y="233.0" width="1.2" height="2" fill="#ACACAA"/><rect x="1133.1" y="236.0" width="7.0" height="2" fill="#ACACAA"/><rect x="1141.3" y="236.0" width="7.0" height="2" fill="#8FCBC2"/><rect x="1133.1" y="239.0" width="5.8" height="2" fill="#ACACAA"/><rect x="1140.1" y="239.0" width="8.2" height="2" fill="#8FCBC2"/><rect x="1128.4" y="242.0" width="3.5" height="2" fill="#ACACAA"/><rect x="1128.4" y="245.0" width="8.2" height="2" fill="#E3C882"/><rect x="1137.8" y="245.0" width="7.0" height="2" fill="#ACACAA"/><rect x="1123.8" y="248.0" width="1.2" height="2" fill="#ACACAA"/><rect x="1123.8" y="251.0" width="9.4" height="2" fill="#E3C882"/><rect x="1134.3" y="251.0" width="3.5" height="2" fill="#ACACAA"/><rect x="1139.0" y="251.0" width="1.2" height="2" fill="#ACACAA"/><rect x="1128.4" y="254.0" width="11.7" height="2" fill="#ACACAA"/><rect x="1141.3" y="254.0" width="2.3" height="2" fill="#C9CF7E"/><rect x="1128.4" y="257.0" width="2.3" height="2" fill="#C9CF7E"/><rect x="1132.0" y="257.0" width="11.7" height="2" fill="#ACACAA"/><rect x="1144.8" y="257.0" width="1.2" height="2" fill="#ACACAA"/><rect x="1147.2" y="257.0" width="1.2" height="2" fill="#E59ABD"/><rect x="1149.5" y="257.0" width="1.2" height="2" fill="#ACACAA"/><rect x="1133.1" y="260.0" width="4.7" height="2" fill="#ACACAA"/><rect x="1139.0" y="260.0" width="14.0" height="2" fill="#E3C882"/><rect x="1154.2" y="260.0" width="4.7" height="2" fill="#ACACAA"/><rect x="1128.4" y="263.0" width="1.2" height="2" fill="#ACACAA"/><rect x="1123.8" y="266.0" width="1.2" height="2" fill="#ACACAA"/><rect x="1119.1" y="269.0" width="3.5" height="2" fill="#ACACAA"/><rect x="1114.4" y="272.0" width="1.2" height="2" fill="#ACACAA"/><rect x="1116.7" y="272.0" width="4.7" height="2" fill="#C9CF7E"/><rect x="1122.6" y="272.0" width="2.3" height="2" fill="#ACACAA"/><rect x="1119.1" y="275.0" width="9.4" height="2" fill="#ACACAA"/><rect x="1129.6" y="275.0" width="3.5" height="2" fill="#E3C882"/><rect x="1119.1" y="278.0" width="2.3" height="2" fill="#C9CF7E"/><rect x="1122.6" y="278.0" width="11.7" height="2" fill="#ACACAA"/><rect x="1135.5" y="278.0" width="2.3" height="2" fill="#C9CF7E"/><rect x="1139.0" y="278.0" width="1.2" height="2" fill="#E59ABD"/><rect x="1141.3" y="278.0" width="1.2" height="2" fill="#ACACAA"/><rect x="1123.8" y="281.0" width="3.5" height="2" fill="#ACACAA"/><rect x="1128.4" y="281.0" width="16.4" height="2" fill="#E3C882"/><rect x="1146.0" y="281.0" width="3.5" height="2" fill="#ACACAA"/><rect x="1119.1" y="284.0" width="1.2" height="2" fill="#ACACAA"/><rect x="1119.1" y="287.0" width="9.4" height="2" fill="#C9CF7E"/><rect x="1129.6" y="287.0" width="4.7" height="2" fill="#95C7E8"/><rect x="1135.5" y="287.0" width="12.9" height="2" fill="#8FCBC2"/><rect x="1149.5" y="287.0" width="1.2" height="2" fill="#ACACAA"/><rect x="1114.4" y="290.0" width="1.2" height="2" fill="#ACACAA"/><rect x="1109.7" y="293.0" width="1.2" height="2" fill="#ACACAA"/><rect x="1112.1" y="293.0" width="5.8" height="2" fill="#C9CF7E"/><rect x="1119.1" y="293.0" width="7.0" height="2" fill="#ACACAA"/><rect x="1127.3" y="293.0" width="1.2" height="2" fill="#ACACAA"/><rect x="1114.4" y="296.0" width="8.2" height="2" fill="#E3C882"/><rect x="1123.8" y="296.0" width="8.2" height="2" fill="#ACACAA"/><rect x="1109.7" y="299.0" width="1.2" height="2" fill="#ACACAA"/><rect x="1105.0" y="302.0" width="3.5" height="2" fill="#ACACAA"/><rect x="1100.4" y="305.0" width="1.2" height="2" fill="#ACACAA"/><rect x="1095.7" y="311.0" width="1.2" height="2" fill="#ACACAA"/><rect x="1095.7" y="314.0" width="2.3" height="2" fill="#DAD7CB"/><rect x="1099.2" y="314.0" width="9.4" height="2" fill="#DAD7CB"/><rect x="1095.7" y="317.0" width="3.5" height="2" fill="#E3C882"/><rect x="1100.4" y="317.0" width="5.8" height="2" fill="#ACACAA"/><rect x="1107.4" y="317.0" width="7.0" height="2" fill="#ACACAA"/><rect x="1115.6" y="317.0" width="7.0" height="2" fill="#ACACAA"/><rect x="1123.8" y="317.0" width="1.2" height="2" fill="#ACACAA"/><rect x="1100.4" y="320.0" width="8.2" height="2" fill="#C9CF7E"/><rect x="1109.7" y="320.0" width="5.8" height="2" fill="#95C7E8"/><rect x="1116.7" y="320.0" width="9.4" height="2" fill="#E3C882"/><rect x="1127.3" y="320.0" width="7.0" height="2" fill="#ACACAA"/><rect x="1135.5" y="320.0" width="8.2" height="2" fill="#8FCBC2"/><rect x="1144.8" y="320.0" width="7.0" height="2" fill="#ACACAA"/><rect x="1153.0" y="320.0" width="7.0" height="2" fill="#ACACAA"/><rect x="1095.7" y="323.0" width="1.2" height="2" fill="#ACACAA"/><rect x="1095.7" y="326.0" width="2.3" height="2" fill="#DAD7CB"/><rect x="1099.2" y="326.0" width="10.5" height="2" fill="#DAD7CB"/><rect x="1095.7" y="329.0" width="3.5" height="2" fill="#E3C882"/><rect x="1100.4" y="329.0" width="5.8" height="2" fill="#ACACAA"/><rect x="1107.4" y="329.0" width="7.0" height="2" fill="#ACACAA"/><rect x="1115.6" y="329.0" width="7.0" height="2" fill="#ACACAA"/><rect x="1123.8" y="329.0" width="1.2" height="2" fill="#ACACAA"/><rect x="1100.4" y="332.0" width="8.2" height="2" fill="#C9CF7E"/><rect x="1109.7" y="332.0" width="5.8" height="2" fill="#95C7E8"/><rect x="1116.7" y="332.0" width="9.4" height="2" fill="#E3C882"/><rect x="1127.3" y="332.0" width="7.0" height="2" fill="#ACACAA"/><rect x="1135.5" y="332.0" width="8.2" height="2" fill="#8FCBC2"/><rect x="1144.8" y="332.0" width="7.0" height="2" fill="#ACACAA"/><rect x="1153.0" y="332.0" width="7.0" height="2" fill="#ACACAA"/><rect x="1095.7" y="335.0" width="1.2" height="2" fill="#ACACAA"/><rect x="1091.0" y="341.0" width="1.2" height="2" fill="#ACACAA"/><rect x="1091.0" y="344.0" width="7.0" height="2" fill="#A6A8DE"/><rect x="1099.2" y="344.0" width="11.7" height="2" fill="#ACACAA"/><rect x="1112.1" y="344.0" width="1.2" height="2" fill="#ACACAA"/><rect x="1114.4" y="344.0" width="4.7" height="2" fill="#C9CF7E"/><rect x="1120.2" y="344.0" width="11.7" height="2" fill="#E3C882"/><rect x="1133.1" y="344.0" width="3.5" height="2" fill="#ACACAA"/><rect x="1091.0" y="347.0" width="8.2" height="2" fill="#C9CF7E"/><rect x="1100.4" y="347.0" width="10.5" height="2" fill="#C9CF7E"/><rect x="1112.1" y="347.0" width="11.7" height="2" fill="#ACACAA"/></svg>
<div class="abs" style="left:1190px;top:106px;width:8px;height:192px;background:#D9C583"></div>
<div class="abs" style="left:1191px;top:138px;width:7px;height:4px;background:#3DC47A"></div>

<!-- ============ console ============ -->
<div id="conline"></div>
<div id="console"></div>
<div class="abs" style="left:23px;top:825px;font-size:13.500px;word-spacing:1.500px;letter-spacing:.2px;line-height:18px;color:#222;white-space:nowrap">pink - Web</div>
<div class="abs" style="left:18px;top:848px;width:98px;height:1px;background:#3DA35D"></div>
<div class="log" style="top:866px"><span class="ts">15:52:01.468</span> [system] <span class="cj">请注意</span> showLoading <span class="cj">与</span> hideLoading <span class="cj">必须配对使用</span></div>
<div class="log" style="top:886px"><span class="ts">15:59:31.727</span> [HMR] Waiting for update signal from WDS...</div>
<div class="log" style="top:906px"><span class="ts">15:59:31.878</span> <span class="pk">[number] 1</span> <a>at utils/toLang.js:11</a></div>
<div class="log" style="top:926px"><span class="ts">15:59:39.655</span> [HMR] Waiting for update signal from WDS...</div>
<div class="log" style="top:946px"><span class="ts">15:59:39.789</span> <span class="pk">[number] 1</span> <a>at utils/toLang.js:11</a></div>
<svg class="abs" style="left:1019px;top:826px;width:15px;height:15px" viewBox="0 0 16 16"><g fill="none" stroke="#E58A78" stroke-width="1.100"><ellipse cx="8" cy="9.300" rx="3.400" ry="4.700"/><path d="M5.500 5.300a2.500 2.500 0 0 1 5 0M8 4.800v9.200M1.800 9.300h2.800M11.400 9.300h2.800M2.500 5l2.600 1.700M13.500 5l-2.600 1.700M2.500 14l2.600-2M13.500 14l-2.600-2"/></g></svg>
<svg class="abs" style="left:1050px;top:827px;width:14px;height:14px" viewBox="0 0 14 14"><g fill="none" stroke="#8FB0A4" stroke-width="1.100"><path d="M2.600 3.300A5.600 5.600 0 1 1 1.400 7"/><path d="M1 1.200l1.500 2.300 2.500-.8"/></g><path d="M5.300 4.500L10 7l-4.700 2.500z" fill="#8FB0A4"/></svg>
<div class="abs" style="left:1081px;top:828px;width:12px;height:12px;border:1px solid #D98C84;background:#FFFEF9"></div>
<div class="abs" style="left:1083px;top:830px;width:8px;height:8px;background:#CC807A"></div>
<svg class="abs" style="left:1109px;top:826px;width:17px;height:15px" viewBox="0 0 17 15"><g fill="none" stroke="#8C7B48" stroke-width="1.100"><path d="M9.500 2.500H1v11.500h13V8"/><path d="M3.500 6l2.500 2.300-2.500 2.300M7.500 11h3"/><path d="M11 3.500h5M13.500 1v5"/></g></svg>
<svg class="abs" style="left:1140px;top:830px;width:15px;height:9px" viewBox="0 0 15 9"><path d="M1 8l6.500-6.500L14 8" fill="none" stroke="#9A8A58" stroke-width="1.300"/></svg>
<svg class="abs" style="left:1169px;top:828px;width:16px;height:12px" viewBox="0 0 16 13"><g fill="none" stroke="#6F5F2C" stroke-width="1.400"><path d="M1 1.500l7 9.500M8 1.500L1 11"/><path d="M12.500 1.500v9.500M10 8.500l2.500 2.800 2.500-2.800"/></g></svg>

<div class="abs" style="left:1190px;top:987px;width:8px;height:14px;background:#F6F0DC"></div>

<!-- ============ status bar ============ -->
<div id="statline"></div>
<div id="status">
  <svg class="abs" style="left:28px;top:4px;width:15px;height:15px" viewBox="0 0 15 15"><circle cx="7.500" cy="7.500" r="6.800" fill="none" stroke="#9A9A9A" stroke-width="1"/><circle cx="7.500" cy="5.800" r="2.300" fill="#9A9A9A"/><path d="M3.200 12.300a4.400 4.400 0 0 1 8.600 0z" fill="#9A9A9A"/></svg>
  <div class="st" style="left:49px;color:#1E9E2E">未登录</div>
  <svg class="abs" style="left:145px;top:5px;width:13px;height:12px" viewBox="0 0 13 12"><path d="M0.500 1.500h2M0.500 6h2M0.500 10.500h2M4.500 1.500h8M4.500 6h8M4.500 10.500h8" stroke="#8a7f58" stroke-width="1.2"/></svg>
  <svg class="abs" style="left:170px;top:5px;width:14px;height:12px" viewBox="0 0 14 12"><rect x="0.500" y="0.500" width="13" height="11" fill="none" stroke="#6b6243" stroke-width="1"/><path d="M3 3.500l2.500 2.500L3 8.500M7 8.500h3" fill="none" stroke="#6b6243" stroke-width="1"/></svg>
  <div class="st" style="left:1306px">语法提示库</div>
  <div class="st" style="left:1392px">行:6</div>
  <div class="st" style="left:1424px">列:49</div>
  <div class="st" style="left:1479px">UTF-8</div>
  <div class="st" style="left:1539px">JavaScript</div>
  <svg class="abs" style="left:1620px;top:3px;width:18px;height:16px" viewBox="0 0 18 16"><circle cx="7.500" cy="9" r="6" fill="#B89A58"/><path d="M7.500 5.500v5M5.300 8.500l2.200 2.200 2.200-2.200" fill="none" stroke="#FFFEF9" stroke-width="1.300"/><circle cx="14" cy="3.500" r="2.300" fill="#F0362E"/></svg>
  <svg class="abs" style="left:1651px;top:3px;width:14px;height:16px" viewBox="0 0 14 16"><path d="M7 1.200a1 1 0 0 1 1 1v.500a4.300 4.300 0 0 1 3.300 4.300v3.500l1.700 2v.700H1v-.700l1.700-2V7a4.300 4.300 0 0 1 3.300-4.300v-.5a1 1 0 0 1 1-1zM5.500 14h3a1.500 1.500 0 0 1-3 0z" fill="#B89A58"/></svg>
</div>

<!-- ============ right panel ============ -->
<div id="rightline"></div>
<div id="right"></div>
<div class="abs" style="left:1199px;top:60px;width:110px;height:29px;background:#FFFEF9;border-right:1px solid #DECEA0"></div>
<div class="abs" style="left:1309px;top:88px;width:382px;height:1px;background:#DECEA0"></div>
<div class="abs" style="left:1199px;top:89px;width:492px;height:72px;background:#FFFEF9"></div>
<div class="abs" style="left:1199px;top:160px;width:492px;height:1px;background:#DECEA0;z-index:2"></div>
<div class="abs" style="left:1210px;top:67px;font-size:12px;letter-spacing:.6px;line-height:18px;color:#222;white-space:nowrap">Web浏览器</div>
<svg class="abs" style="left:1286px;top:71px;width:9px;height:9px" viewBox="0 0 9 9"><path d="M0.500 0.500l8 8M8.500 0.500l-8 8" stroke="#6b5c2e" stroke-width="1"/></svg>
<div class="abs" style="left:1205px;top:95px;width:480px;height:27px;border:1px solid #DCDCDC;background:#FFFEF9"></div>
<div class="abs" style="left:1214px;top:99px;font-size:13.500px;letter-spacing:.05px;line-height:18px;color:#222;white-space:nowrap">http://localhost:8080/#/pages/index/index</div>
<div class="abs" style="left:1205px;top:127px;width:120px;height:27px;border:1px solid #3DA35D;background:#FFFEF9"></div>
<div class="abs" style="left:1211px;top:132px;font-size:13.300px;line-height:18px;color:#222;white-space:nowrap">iPhone 6/7/8</div>
<svg class="abs" style="left:1312px;top:137px;width:8px;height:6px" viewBox="0 0 8 6"><path d="M0.500 0.800h7L4 5.200z" fill="#3DA35D"/></svg>
<!-- device toolbar icons -->
<svg class="abs" style="left:1337px;top:134px;width:13px;height:12px" viewBox="0 0 15 15" preserveAspectRatio="none"><g fill="none" stroke="#3DA35D" stroke-width="1.200"><path d="M5.500 1.500h8v12h-12v-8"/><path d="M8.500 8.500l-7-7M1.200 5V1.200H5"/></g></svg>
<svg class="abs" style="left:1366px;top:133px;width:15px;height:15px" viewBox="0 0 15 15"><g fill="none" stroke="#3DA35D" stroke-width="1.200"><path d="M7.500 1l1.600.9 1.800-.3 1 1.500 1.700.8-.1 1.800 1 1.500-1 1.500.1 1.800-1.700.8-1 1.500-1.800-.3-1.600.9-1.600-.9-1.800.3-1-1.500-1.700-.8.1-1.800-1-1.500 1-1.500-.1-1.800 1.700-.8 1-1.500 1.800.3z" stroke-linejoin="round"/><circle cx="7.500" cy="7.500" r="2.300"/></g></svg>
<svg class="abs" style="left:1397px;top:134px;width:15px;height:13px" viewBox="0 0 15 13"><g fill="none" stroke="#3DA35D" stroke-width="1.100"><rect x="0.600" y="0.600" width="13.800" height="11.800"/><path d="M3 3.500l2.500 2.500L3 8.500M7 9h3.500"/></g></svg>
<svg class="abs" style="left:1426px;top:134px;width:15px;height:13px" viewBox="0 0 15 13"><path d="M14 6.500H1.500M6.500 1.500l-5 5 5 5" fill="none" stroke="#3DA35D" stroke-width="1.600"/></svg>
<svg class="abs" style="left:1456px;top:134px;width:15px;height:13px" viewBox="0 0 15 13"><path d="M1 6.500h12.500M8.500 1.500l5 5-5 5" fill="none" stroke="#A9A9A9" stroke-width="1.400"/></svg>
<svg class="abs" style="left:1486px;top:133px;width:15px;height:15px" viewBox="0 0 15 15"><path d="M12.800 9.800A6 6 0 1 1 11.800 3.300" fill="none" stroke="#3DA35D" stroke-width="1.200"/><path d="M12.800 0.800v3.700H9" fill="none" stroke="#3DA35D" stroke-width="1.200"/></svg>
<svg class="abs" style="left:1517px;top:133px;width:13px;height:15px" viewBox="0 0 13 15"><g fill="none" stroke="#3DA35D" stroke-width="1.200"><rect x="1.600" y="6.600" width="9.800" height="7.300" rx="1"/><path d="M3.800 6.500V4a2.700 2.700 0 0 1 5.400-.6"/></g></svg>
<svg class="abs" style="left:1547px;top:134px;width:13px;height:13px" viewBox="0 0 13 13"><g fill="none" stroke="#3DA35D" stroke-width="1.200"><rect x="0.600" y="0.600" width="4.300" height="4.300"/><rect x="8.100" y="0.600" width="4.300" height="4.300"/><rect x="0.600" y="8.100" width="4.300" height="4.300"/><path d="M8 8.600h2M12 8v1.500M8 12h1.500M11 11.500h1.500"/></g></svg>
<div id="preview"></div>
<!-- ============ phone preview ============ -->
<div id="phone" class="abs" style="left:1257px;top:248px;width:375px;height:667px;background:#808080;box-shadow:0 3px 15px rgba(0,0,0,.26);overflow:hidden;font-family:'Liberation Sans','Noto Sans CJK TC',sans-serif">
  <!-- close -->
  <svg class="abs" style="left:17px;top:24px;width:14px;height:14px" viewBox="0 0 14 14"><path d="M0.700 0.700l12.600 12.600M13.300 0.700L0.700 13.300" stroke="#0c0c0c" stroke-width="1.500"/></svg>
  <div class="abs" style="left:286px;top:16px;width:73px;height:30px;border-radius:5px;background:#7E142C;color:#CBAEB6;font-size:13px;line-height:32px;text-align:center">Use App</div>
  <!-- logo -->
  <svg class="abs" style="left:0;top:0;width:375px;height:667px" viewBox="0 0 375 667"><g fill="#0F0326"><polygon points="22.9,85.5 28.6,82.3 34.6,85.8 34.6,92.6 29.0,95.4 29.0,89.0"/><polygon points="35.7,92.6 41.0,89.4 46.4,92.6 46.4,99.0 41.0,102.2 41.0,95.8"/><polygon points="22.9,99.3 28.6,96.5 34.6,99.7 34.6,106.1 29.0,109.3 29.0,102.5"/></g></svg>
  <div class="abs" style="left:52px;top:87px;font-size:14.400px;font-weight:bold;letter-spacing:.7px;line-height:20px;color:#1e1e1e">Dovetail</div>
  <!-- globe -->
  <svg class="abs" style="left:332px;top:79px;width:28px;height:28px" viewBox="0 0 28 28"><g fill="none" stroke="#0d0d0d" stroke-width="1.700"><circle cx="14" cy="14" r="12.400"/><ellipse cx="14" cy="14" rx="4.800" ry="12.400"/><ellipse cx="14" cy="14" rx="9.400" ry="12.400"/><path d="M14 1.600v24.800M1.600 14h24.800M4.200 6.800c6 2.600 13.600 2.600 19.600 0M4.200 21.200c6-2.600 13.600-2.600 19.600 0"/></g></svg>
  <!-- brands -->
  <div class="abs" style="left:15px;top:140px;width:345px;height:40px;overflow:hidden;font-size:16px;line-height:41px;color:#B9A0A6;text-align:center;white-space:nowrap">
    <div class="abs" style="left:0;top:0;width:101px;height:40px;border-radius:5px;background:#7E142C">BULGARI</div>
    <div class="abs" style="left:105px;top:0;width:82px;height:40px;border-radius:5px;background:#7E142C">GUCCI</div>
    <div class="abs" style="left:192px;top:0;width:96px;height:40px;border-radius:5px;background:#7E142C">CHANEL</div>
    <div class="abs" style="left:293px;top:0;width:80px;height:40px;border-radius:5px;background:#7E142C;text-align:left;padding-left:16px">DIRO</div>
  </div>
  <!-- home title + bell -->
  <div class="abs" style="left:10px;top:477px;font-size:18px;line-height:26px;color:#1d1d1d;white-space:nowrap">首頁</div>
  <svg class="abs" style="left:337px;top:475px;width:26px;height:32px" viewBox="0 0 26 32"><g fill="none" stroke="#CC7D88" stroke-width="1.400"><path d="M13 2.500c-5 0-8.500 4-8.500 9v8.500L1.500 24.500h23l-3-4.500V11.500c0-5-3.500-9-8.500-9z"/><path d="M9.500 24.500a3.500 3.500 0 0 0 7 0"/></g></svg>
  <!-- circles -->
  <div class="abs" style="left:40px;top:521px;width:46px;height:46px;border-radius:23px;background:linear-gradient(135deg,#2E86B8,#0E5C94)"></div>
  <svg class="abs" style="left:48px;top:530px;width:29px;height:29px" viewBox="0 0 24 24"><path d="M12 2l3.100 6.500 7 .9-5.200 4.800 1.400 7L12 17.700 5.700 21.200l1.400-7L1.900 9.400l7-.9z" fill="none" stroke="#BDD2DF" stroke-width="1.700" stroke-linejoin="round"/></svg>
  <div class="abs" style="left:161px;top:521px;width:46px;height:46px;border-radius:23px;background:linear-gradient(135deg,#C4487C,#9C2E5E)"></div>
  <svg class="abs" style="left:171px;top:528px;width:26px;height:26px" viewBox="0 0 26 26"><g stroke="#E3BFD0" stroke-width="2" fill="#E3BFD0"><path d="M1 7h6M11 7h14M1 16h9M15 16h10M1 25h17"/><circle cx="9" cy="7" r="2.300" stroke="none"/><circle cx="12.500" cy="16" r="2.500" stroke="none"/><circle cx="22" cy="25" r="3" stroke="none"/></g></svg>
  <div class="abs" style="left:281px;top:521px;width:46px;height:46px;border-radius:23px;background:linear-gradient(135deg,#2E86B8,#0E5C94)"></div>
  <svg class="abs" style="left:292px;top:531px;width:25px;height:25px" viewBox="0 0 25 25"><g stroke="#BDD2DF" stroke-width="1.800" fill="none"><path d="M1.500 1v22.500h23"/><path d="M6 23V10h4.500v13M14.500 23V14M14.500 23V4.500H19V23"/></g></svg>
  <div class="abs" style="left:26px;top:568.500px;width:80px;text-align:center;font-size:16px;line-height:24px;color:#A41B37">介紹</div>
  <div class="abs" style="left:147px;top:568.500px;width:80px;text-align:center;font-size:16px;line-height:24px;color:#A41B37">規則</div>
  <div class="abs" style="left:268px;top:568.500px;width:80px;text-align:center;font-size:16px;line-height:24px;color:#A41B37">代理商</div>
  <!-- next row (clipped) -->
  <div class="abs" style="left:40px;top:614px;width:46px;height:46px;border-radius:23px;background:#C98A45"></div>
  <div class="abs" style="left:161px;top:614px;width:46px;height:46px;border-radius:23px;background:#BC7A86"></div>
  <div class="abs" style="left:281px;top:614px;width:46px;height:46px;border-radius:23px;background:#9B3FA9"></div>
  <!-- tabbar -->
  <div class="abs" style="left:0;top:617px;width:375px;height:50px;background:#808080"></div>
  <svg class="abs" style="left:9px;top:626px;width:32px;height:30px" viewBox="0 0 32 30"><path d="M2 14.500L16 2l14 12.500M6.500 11v15.500a1.500 1.500 0 0 0 1.500 1.500h4V19.500h8V28h4a1.500 1.500 0 0 0 1.500-1.500V11" fill="none" stroke="#111" stroke-width="2.200" stroke-linejoin="round" stroke-linecap="round"/></svg>
  <svg class="abs" style="left:94px;top:629px;width:25px;height:26px" viewBox="0 0 25 26"><g fill="none" stroke="#111" stroke-width="2"><rect x="1.500" y="2" width="8.500" height="9" rx="1.500"/><rect x="14" y="2" width="9" height="9" rx="4.500"/><rect x="1.500" y="15.500" width="8.500" height="9" rx="1.500"/><rect x="14.500" y="15.500" width="8.500" height="9" rx="1.500"/></g></svg>
  <svg class="abs" style="left:175px;top:629px;width:26px;height:26px" viewBox="0 0 26 26"><g fill="none" stroke="#111" stroke-width="2" stroke-linejoin="round"><path d="M1 2h3.500l3.500 15.500h13.500"/><path d="M5.500 5h17.500l-1.500 9.500H7.500"/></g><circle cx="9.500" cy="22.500" r="1.700" fill="#111"/><circle cx="19.500" cy="22.500" r="1.700" fill="#111"/></svg>
  <svg class="abs" style="left:257px;top:630px;width:24px;height:23px" viewBox="0 0 24 23"><g fill="none" stroke="#111" stroke-width="2" stroke-linejoin="round"><path d="M1.500 1.500h21v16h-7.500l-3 3-3-3H1.500z"/><path d="M6.500 7h11M12.500 11.500h5"/></g></svg>
  <svg class="abs" style="left:337px;top:628px;width:27px;height:27px" viewBox="0 0 27 27"><g fill="none" stroke="#111" stroke-width="2.100"><circle cx="13.500" cy="8" r="6.300"/><path d="M1.500 25.500c1-6 5.500-9 12-9s11 3 12 9z" stroke-linejoin="round"/></g></svg>
</div>
<!-- dialog + gift (above phone content) -->
<div class="abs" style="left:1295px;top:548px;width:300px;height:236px;border-radius:13px;background:#F8F8F8;box-shadow:0 3px 7px rgba(0,0,0,.28)"></div>
<div class="abs thai" style="left:1295px;top:563px;width:300px;text-align:center;font-size:13.200px;line-height:22px;color:#3a3a3a;white-space:nowrap;font-family:'Liberation Sans','Noto Sans CJK SC',sans-serif">公告งานที่จะให้ทำไม่ใช่การพนัน ไม่ใช่เกมส์ งาน<br>ของเราสร้างรายได้ ได้จริงและถูกต้องตาม<br>กฎหมาย<br>งานเป็นงานกดรับออเดอร์สินค้านะคะ<br>ช่วยร้านค้าช้อปปิ้งออนไลน์เพิ่มยอดขาย<br>รับรายได้เป็นค่าคอมมิชชั่นจากสินค้านะคะพี่</div>
<div class="abs" style="left:1407px;top:732px;width:75px;height:33px;border-radius:17px;background:linear-gradient(90deg,#F5741F,#FBDA66);color:#fff;font-size:16px;font-weight:bold;line-height:33px;text-align:center;font-family:'Liberation Sans',sans-serif">OK</div>
<svg class="abs" style="left:1355px;top:370px;width:180px;height:200px" viewBox="1355 370 180 200">
<defs>
<linearGradient id="gl" x1="0" y1="0" x2="1" y2="0.150"><stop offset="0" stop-color="#F7B83C"/><stop offset="0.550" stop-color="#FCCB62"/><stop offset="0.850" stop-color="#FFE19A"/><stop offset="1" stop-color="#FFD684"/></linearGradient>
<linearGradient id="gl2" x1="0" y1="0" x2="0" y2="1"><stop offset="0" stop-color="#FFF" stop-opacity="0.180"/><stop offset="0.500" stop-color="#FFF" stop-opacity="0"/><stop offset="1" stop-color="#E88A00" stop-opacity="0.350"/></linearGradient>
<linearGradient id="gr" x1="0" y1="0" x2="0.500" y2="1"><stop offset="0" stop-color="#F4A52B"/><stop offset="0.550" stop-color="#EE8E19"/><stop offset="1" stop-color="#E47A10"/></linearGradient>
<linearGradient id="gt" x1="0" y1="0" x2="1" y2="0"><stop offset="0" stop-color="#F9BC48"/><stop offset="0.450" stop-color="#FBC65C"/><stop offset="1" stop-color="#F5A52A"/></linearGradient>
<linearGradient id="rb" x1="0" y1="0" x2="0.300" y2="1"><stop offset="0" stop-color="#EE3F56"/><stop offset="0.450" stop-color="#E0203B"/><stop offset="1" stop-color="#C5112C"/></linearGradient>
<linearGradient id="rb2" x1="0" y1="0" x2="0" y2="1"><stop offset="0" stop-color="#EC3A52"/><stop offset="0.600" stop-color="#DE1D38"/><stop offset="1" stop-color="#C8122D"/></linearGradient>
<linearGradient id="rb3" x1="0" y1="0" x2="1" y2="0"><stop offset="0" stop-color="#D81934"/><stop offset="0.500" stop-color="#EE4A60"/><stop offset="1" stop-color="#D41631"/></linearGradient>
<radialGradient id="sh" cx="0.500" cy="0.500" r="0.500"><stop offset="0" stop-color="#000" stop-opacity="0.450"/><stop offset="1" stop-color="#000" stop-opacity="0"/></radialGradient>
<pattern id="sw" width="13" height="14" patternUnits="userSpaceOnUse" patternTransform="rotate(12)"><circle cx="6" cy="7" r="4.200" fill="none" stroke="#FFE9A8" stroke-width="0.900" opacity="0.650"/><circle cx="6" cy="7" r="1.800" fill="none" stroke="#FFE9A8" stroke-width="0.800" opacity="0.650"/></pattern>
<pattern id="sw2" width="13" height="14" patternUnits="userSpaceOnUse" patternTransform="rotate(-18)"><circle cx="6" cy="7" r="4.200" fill="none" stroke="#F9B544" stroke-width="0.900" opacity="0.500"/><circle cx="6" cy="7" r="1.800" fill="none" stroke="#F9B544" stroke-width="0.800" opacity="0.500"/></pattern>
</defs>
<ellipse cx="1494" cy="537" rx="40" ry="11" fill="url(#sh)" transform="rotate(-26 1494 537)"/>
<path d="M1371.0 426.5L1447.3 447.0L1447.3 554.0L1371.4 525.7z" fill="url(#gl)"/><path d="M1371.0 426.5L1447.3 447.0L1447.3 554.0L1371.4 525.7z" fill="url(#gl2)"/><path d="M1371.0 426.5L1447.3 447.0L1447.3 554.0L1371.4 525.7z" fill="url(#sw)"/>
<path d="M1447.3 447.0L1511.6 423.5L1510.6 520.0L1447.3 554.0z" fill="url(#gr)"/><path d="M1447.3 447.0L1511.6 423.5L1510.6 520.0L1447.3 554.0z" fill="url(#sw2)"/>
<path d="M1371.0 426.5L1441.0 411.5L1511.6 423.5L1447.3 447.0z" fill="url(#gt)"/>
<path d="M1447.300 447L1471 478 1447.300 554M1511.600 423.500L1497 452 1510.600 520M1471 478L1497 452" fill="none" stroke="#D8740F" stroke-width="0.800" opacity="0.700"/>
<path d="M1447.300 447V554" stroke="#FFE2A0" stroke-width="0.900" opacity="0.900"/>
<path d="M1393.200 432.500L1408.800 436.700 1474.200 417.700 1459.100 415.300z" fill="#E2233D"/>
<path d="M1476.100 436.500L1489.800 431.500 1415 416.900 1400.800 420z" fill="#D8152F"/>
<path d="M1393.200 432.500L1408.800 436.700 1408.400 539.500 1394.400 534.300z" fill="#E01333"/>
<path d="M1476.100 436.500L1489.800 431.500 1489.200 531.500 1476.500 538.300z" fill="#C20E29"/>
<path d="M1434.5 416.3C1435.3 414.8 1432.4 406.0 1430.7 401.1C1429.0 396.3 1426.9 390.7 1424.4 387.2C1421.8 383.7 1418.8 380.4 1415.5 380.2C1412.2 380.0 1408.0 382.9 1404.7 385.9C1401.5 389.0 1397.0 395.6 1395.9 398.6C1394.7 401.5 1394.9 402.8 1397.8 403.6C1400.6 404.5 1408.3 402.6 1413.0 403.6C1417.6 404.7 1422.0 407.9 1425.6 410.0C1429.2 412.1 1433.6 417.8 1434.5 416.3z" fill="url(#rb2)"/>
<path d="M1402.2 397.3C1402.6 395.7 1406.8 392.5 1409.2 391.0C1411.6 389.5 1414.2 386.8 1416.8 388.5C1419.3 390.1 1422.3 397.1 1424.4 401.1C1426.5 405.1 1430.7 412.1 1429.4 412.5C1428.2 412.9 1420.6 405.6 1416.8 403.6C1413.0 401.6 1409.1 401.5 1406.6 400.5C1404.2 399.4 1401.8 398.9 1402.2 397.3z" fill="#B90F29" opacity="0.750"/>
<path d="M1432.6 414.4C1429.4 410.1 1419.2 403.7 1413.0 402.1C1406.8 400.6 1399.6 402.0 1395.3 405.2C1390.9 408.4 1387.8 417.8 1387.0 421.4C1386.3 424.9 1387.3 425.2 1390.8 426.4C1394.3 427.7 1401.1 428.7 1407.9 429.0C1414.8 429.2 1427.8 430.4 1432.0 427.9C1436.1 425.5 1435.8 418.7 1432.6 414.4z" fill="url(#rb)"/>
<path d="M1394.0 413.8C1396.3 413.1 1403.1 409.8 1407.9 410.0C1412.8 410.2 1420.6 414.2 1423.1 415.0" fill="none" stroke="#F4687A" stroke-width="1.600" opacity="0.600" stroke-linecap="round"/>
<path fill-rule="evenodd" d="M1445.9 417.6C1446.3 416.0 1451.8 412.4 1456.0 408.7C1460.2 405.0 1466.6 398.6 1471.2 395.4C1475.8 392.3 1480.7 389.7 1483.9 389.7C1487.1 389.7 1489.0 391.4 1490.4 395.4C1491.9 399.4 1492.7 410.4 1492.5 413.8C1492.2 417.1 1492.5 415.7 1488.9 415.7C1485.4 415.7 1477.1 413.4 1471.2 413.8C1465.3 414.2 1457.7 417.6 1453.5 418.2C1449.3 418.8 1445.5 419.2 1445.9 417.6z M1466.1 413.8C1465.7 412.0 1473.1 406.1 1476.3 403.6C1479.4 401.2 1483.0 399.0 1485.1 399.2C1487.2 399.4 1488.2 402.6 1488.9 404.9C1489.7 407.2 1491.2 411.6 1489.6 413.1C1487.9 414.7 1482.7 414.3 1478.8 414.4C1474.9 414.5 1466.6 415.6 1466.1 413.8z" fill="url(#rb2)"/>
<path d="M1447.8 416.3C1452.0 414.3 1463.8 414.1 1471.2 413.8C1478.6 413.5 1488.2 412.9 1492.1 414.4C1495.9 415.9 1494.3 417.9 1494.2 422.6C1494.2 427.4 1493.4 438.4 1491.7 442.9C1490.0 447.4 1487.0 449.0 1483.9 449.5C1480.8 449.9 1477.5 448.0 1473.1 445.4C1468.7 442.8 1461.8 437.3 1457.3 434.0C1452.7 430.8 1447.5 428.8 1445.9 425.8C1444.3 422.8 1443.6 418.3 1447.8 416.3z" fill="url(#rb)"/>
<path d="M1456.0 422.6C1459.0 422.6 1468.5 421.6 1473.7 422.6C1479.0 423.7 1485.3 427.9 1487.7 429.0" fill="none" stroke="#F4687A" stroke-width="1.600" opacity="0.600" stroke-linecap="round"/>
<path d="M1456.0 426.4C1456.8 425.4 1462.7 428.4 1464.2 431.5C1465.7 434.6 1468.9 448.1 1468.9 453.0C1468.9 457.9 1465.4 468.3 1464.4 473.3C1463.3 478.2 1461.1 494.2 1459.8 495.4C1458.5 496.7 1455.5 485.1 1453.5 484.0C1451.4 483.0 1442.2 489.0 1442.1 486.6C1441.9 484.1 1450.4 468.5 1452.2 463.1C1454.0 457.7 1457.1 444.6 1457.5 440.4C1458.0 436.1 1455.2 427.5 1456.0 426.4z" fill="url(#rb3)"/>
<path d="M1433.5 415.7C1434.9 414.5 1438.7 414.3 1440.8 414.4C1442.9 414.6 1445.2 415.2 1446.1 416.6C1447.1 417.9 1446.7 420.8 1446.5 422.6C1446.4 424.5 1446.6 426.6 1445.3 427.7C1443.9 428.8 1440.3 429.1 1438.3 429.0C1436.3 428.9 1434.4 428.3 1433.5 427.1C1432.5 425.8 1432.6 423.3 1432.6 421.4C1432.6 419.5 1432.1 416.8 1433.5 415.7z" fill="#E8304A"/>
<path d="M1435.8 416.3C1436.0 417.3 1437.0 420.1 1437.0 422.0C1437.0 423.9 1436.0 426.7 1435.8 427.7" fill="none" stroke="#B50E26" stroke-width="0.700" opacity="0.700"/>
</svg>


<!-- ============ watermarks ============ -->
<div class="abs wm" style="left:35.500px;top:312px"><span class="wl">515</span>源码 <span class="wl">515ym.com</span></div>
<div class="abs wm" style="left:1182.300px;top:642px"><span class="wl">515</span>源码 <span class="wl">515ym.com</span></div>
<svg class="abs" style="left:0;top:0;width:1691px;height:1027px;pointer-events:none" viewBox="0 0 1691 1027">
<circle cx="845.8" cy="513.6" r="139.500" fill="none" stroke="#F20A0A" stroke-width="6"/>
<g font-family="Liberation Sans,sans-serif" font-weight="bold" font-size="24.500" fill="#F20A0A" text-anchor="middle">
<text transform="translate(741.5 537.7) rotate(-103.0)">w</text>
<text transform="translate(739.0 507.6) rotate(-86.8)">w</text>
<text transform="translate(744.9 478.1) rotate(-70.6)">w</text>
<text transform="translate(758.8 451.3) rotate(-54.4)">.</text>
<text transform="translate(779.6 429.5) rotate(-38.2)">5</text>
<text transform="translate(805.7 414.4) rotate(-22.0)">1</text>
<text transform="translate(835.0 407.1) rotate(-5.8)">5</text>
<text transform="translate(865.1 408.4) rotate(10.4)">y</text>
<text transform="translate(893.7 417.9) rotate(26.6)">m</text>
<text transform="translate(918.5 435.1) rotate(42.8)">.</text>
<text transform="translate(937.5 458.5) rotate(59.0)">c</text>
<text transform="translate(949.3 486.3) rotate(75.2)">o</text>
<text transform="translate(952.8 516.2) rotate(91.4)">m</text>
</g>
<g font-family="Liberation Sans,sans-serif" font-size="13.500" fill="#F20A0A" text-anchor="middle">
<text transform="translate(785.3 629.2) rotate(27.6)">5</text>
<text transform="translate(799.2 635.5) rotate(20.9)">1</text>
<text transform="translate(813.8 640.1) rotate(14.2)">5</text>
<text transform="translate(828.8 643.0) rotate(7.5)">y</text>
<text transform="translate(844.0 644.1) rotate(0.8)">m</text>
<text transform="translate(859.2 643.4) rotate(-5.9)">.</text>
<text transform="translate(874.3 641.0) rotate(-12.6)">c</text>
<text transform="translate(888.9 636.8) rotate(-19.3)">o</text>
<text transform="translate(903.0 630.9) rotate(-26.0)">m</text>
</g>
<text x="772" y="525.600" font-family="Liberation Sans,sans-serif" font-weight="bold" font-size="35.500" letter-spacing="1.800" fill="#F20A0A">515</text>
<text x="838.500" y="526.500" font-family="Noto Serif CJK SC,Noto Sans CJK SC,serif" font-weight="bold" font-size="38.500" letter-spacing="0.500" fill="#F20A0A">源码</text>
<text x="771.500" y="593.200" font-family="Liberation Sans,sans-serif" font-weight="bold" font-size="25.600" letter-spacing="1.500" fill="#F20A0A">515ym.</text>
<text x="872.300" y="593.200" font-family="Liberation Sans,sans-serif" font-weight="bold" font-size="25.600" fill="#F20A0A">com</text>
</svg>
</body>
</html>
